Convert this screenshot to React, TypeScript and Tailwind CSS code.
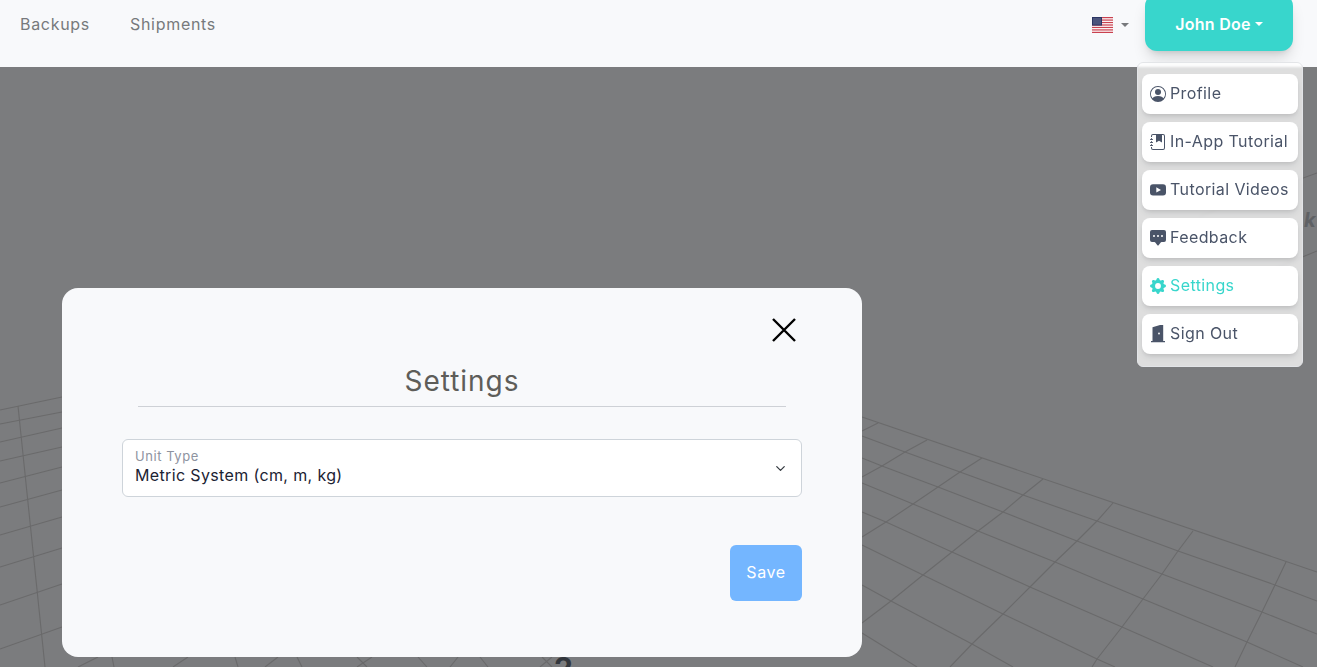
import React from 'react';
import { BsPersonCircle, BsChatSquareDotsFill, BsGearFill } from 'react-icons/bs';
import { ChevronDown } from 'lucide-react';

const FONT = "font-['Inter','Noto_Sans',sans-serif]";

const GRID_LINES = [
  // left of the modal
  '0,410 62,397 140,380',
  '0,424 62,412',
  '0,442 62,428',
  '0,461 62,447',
  '0,483 62,467',
  '0,507 62,490',
  '0,535 62,517',
  '0,567 62,548',
  '0,605 62,584',
  '0,649 62,627',
  '18,406 45,667',
  // right of the modal, running away from the camera
  '862,417 1317,572',
  '862,436 905,452 960,472 1023,495 1097,521 1178,551 1275,585 1317,601',
  '862,458 882,466 938,487 1003,512 1077,541 1162,574 1262,612 1317,634',
  '862,483 913,504 978,531 1055,562 1143,599 1247,642 1303,667',
  '862,512 886,522 952,552 1030,587 1122,627 1213,667',
  '862,545 923,575 1003,614 1097,659 1115,667',
  '862,585 891,601 972,644 1013,667',
  '862,633 917,667',
  '878,423 862,431',
  '927,440 905,452 882,466 862,477',
  '982,458 960,472 938,487 913,504 886,522 862,537',
  '1043,479 1023,495 1003,512 978,531 952,552 923,575 891,601 862,623',
  '1113,503 1097,521 1077,541 1055,562 1030,587 1003,614 972,644 950,667',
  '1193,531 1178,551 1162,574 1143,599 1122,627 1097,659 1092,667',
  '1286,562 1275,585 1262,612 1247,642 1235,667',
  // below the modal
  '78,667 98,657',
  '112,657 114,667',
  '173,667 188,657',
  '235,657 238,667',
  '265,667 278,657',
  '297,657 302,667',
  '357,657 367,667',
  '357,667 372,657',
  '418,657 427,667',
  '450,667 458,657',
  '480,657 488,667',
  '542,657 552,667',
  '540,667 552,657',
  // behind the menu
  '1200,216 1317,173',
  '1210,295 1317,251',
];

function JournalIcon() {
  return (
    <svg viewBox="0 0 16 16" fill="currentColor" className="w-4 h-4 shrink-0">
      <path d="M6 1h6v7.5L9 6.7 6 8.5z" />
      <path d="M3 0h10a2 2 0 0 1 2 2v12a2 2 0 0 1-2 2H3a2 2 0 0 1-2-2v-1h1v1a1 1 0 0 0 1 1h10a1 1 0 0 0 1-1V2a1 1 0 0 0-1-1H3a1 1 0 0 0-1 1v1H1V2a2 2 0 0 1 2-2z" />
      <path d="M1 5v-.5a.5.5 0 0 1 1 0V5h.5a.5.5 0 0 1 0 1h-2a.5.5 0 0 1 0-1H1zm0 3v-.5a.5.5 0 0 1 1 0V8h.5a.5.5 0 0 1 0 1h-2a.5.5 0 0 1 0-1H1zm0 3v-.5a.5.5 0 0 1 1 0v.5h.5a.5.5 0 0 1 0 1h-2a.5.5 0 0 1 0-1H1z" />
    </svg>
  );
}

function VideoIcon() {
  return (
    <svg viewBox="0 0 16 16" className="w-4 h-4 shrink-0">
      <rect x="0" y="2.2" width="16" height="11.4" rx="3" fill="currentColor" />
      <path d="M6.3 5.2v5.4L11 7.9z" fill="#fff" />
    </svg>
  );
}

function DoorIcon() {
  return (
    <svg viewBox="0 0 16 18" className="w-4 h-[18px] shrink-0">
      <path d="M2.5 16V2.2L10 0h3.2v16H15v1.2H1V16z" fill="currentColor" />
      <circle cx="9" cy="8.5" r="0.9" fill="#fff" />
    </svg>
  );
}

function UsFlag() {
  const stripes = [0, 2, 4, 6, 8, 10, 12];
  return (
    <svg viewBox="0 0 21 16" className="w-[21px] h-4">
      <rect width="21" height="16" fill="#fff" />
      {stripes.map((i) => (
        <rect key={i} y={(i * 16) / 13} width="21" height={16 / 13} fill="#c9414f" />
      ))}
      <rect width="10" height="8.6" fill="#2b3563" />
      <rect x="1" y="1" width="8" height="6.6" fill="#5a6288" opacity="0.7" />
    </svg>
  );
}

const Caret = ({ className }: { className: string }) => (
  <span className={`inline-block w-0 h-0 border-x-[4px] border-x-transparent border-t-[4px] ${className}`} />
);

const MENU = [
  { label: 'Profile', icon: <BsPersonCircle size={16} className="shrink-0" /> },
  { label: 'In-App Tutorial', icon: <JournalIcon /> },
  { label: 'Tutorial Videos', icon: <VideoIcon /> },
  { label: 'Feedback', icon: <BsChatSquareDotsFill size={16} className="shrink-0" /> },
  { label: 'Settings', icon: <BsGearFill size={16} className="shrink-0" />, active: true },
  { label: 'Sign Out', icon: <DoorIcon /> },
];

export default function App() {
  return (
    <div className={`relative h-[667px] overflow-hidden bg-[#7b7c7e] ${FONT}`}>
      {/* Dimmed 3D floor behind the modal */}
      <svg className="absolute inset-0 w-full h-full" viewBox="0 0 1317 667" fill="none" stroke="#6a6a6b" strokeWidth="1.1">
        {GRID_LINES.map((pts) => (
          <polyline key={pts} points={pts} />
        ))}
      </svg>
      <span className="absolute left-[554px] top-[653px] text-[30px] font-bold leading-none text-[#33373d]">2</span>
      <span className="absolute left-[1304px] top-[210px] text-[20px] font-bold italic leading-none text-[#5f6164]">k</span>

      <nav className="relative h-[67px] bg-[#f8f9fb] flex items-start pl-5 pr-6">
        <div className="flex gap-10 pt-[12px] text-[#77797c] text-[16px] leading-6 tracking-[0.7px]">
          <span>Backups</span>
          <span>Shipments</span>
        </div>
        <div className="ml-auto flex items-start">
          <div className="flex items-center gap-2 pt-[17px] mr-4">
            <UsFlag />
            <Caret className="border-t-[#77797c]" />
          </div>
          <button className="-mt-[6px] w-[148px] h-[57px] pt-[2px] rounded-xl bg-[#38d6cc] text-white text-[16px] font-semibold tracking-[0.25px] flex items-center justify-center gap-1 shadow-lg shadow-black/15">
            John Doe
            <Caret className="border-t-white" />
          </button>
        </div>
      </nav>

      {/* User dropdown */}
      <div className="absolute left-[1137px] top-[62px] w-[166px] h-[305px] rounded-md border border-[#e3e5e8] bg-white/75 pt-[11px] px-1 flex flex-col gap-2 backdrop-blur-[1px]">
        {MENU.map((item) => (
          <div
            key={item.label}
            className={`h-10 rounded-lg bg-white shadow-md shadow-black/10 pl-2 flex items-center gap-1 text-[16px] tracking-[0.4px] whitespace-nowrap ${
              item.active ? 'text-[#38d6cc]' : 'text-[#4a5468]'
            }`}
          >
            {item.icon}
            <span className="pb-[2px]">{item.label}</span>
          </div>
        ))}
      </div>

      {/* Settings modal */}
      <div className="absolute left-[62px] top-[288px] w-[800px] h-[369px] rounded-2xl bg-[#f8f9fb] px-[60px] pt-[30px] flex flex-col">
        <div className="flex justify-end pr-[6px]">
          <svg viewBox="0 0 24 24" className="w-6 h-6 text-black" fill="none" stroke="currentColor" strokeWidth="2.4">
            <path d="M1 1l22 22M23 1L1 23" />
          </svg>
        </div>
        <div className="mx-4 mt-[18px] pb-[4px] border-b border-[#ced1d6] text-center text-[28px] leading-[42px] text-[#5e5d59] tracking-[0.95px]">
          Settings
        </div>
        <div className="mt-8 h-[58px] rounded-md border border-[#ced4da] bg-white pl-3 pr-[13px] flex items-center justify-between">
          <div className="flex flex-col pb-[2px]">
            <span className="text-[13px] leading-[16px] text-[#8e93a0] tracking-[0.55px]">Unit Type</span>
            <span className="text-[16px] leading-[22px] text-[#1c2333] tracking-[0.36px]">Metric System (cm, m, kg)</span>
          </div>
          <ChevronDown size={15} className="text-[#343a40]" />
        </div>
        <div className="mt-12 flex justify-end">
          <button className="w-[72px] h-14 rounded-md bg-[#74b6ff] text-white text-[16px] tracking-[0.6px] pb-[2px]">Save</button>
        </div>
      </div>
    </div>
  );
}
